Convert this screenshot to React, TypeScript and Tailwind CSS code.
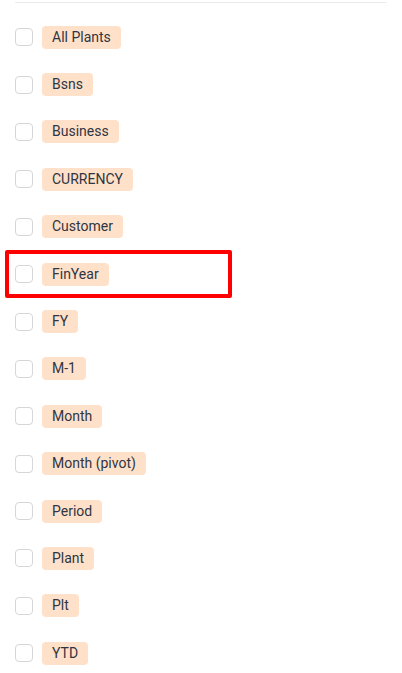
const fields = [
  'All Plants',
  'Bsns',
  'Business',
  'CURRENCY',
  'Customer',
  'FinYear',
  'FY',
  'M-1',
  'Month',
  'Month (pivot)',
  'Period',
  'Plant',
  'Plt',
  'YTD',
];

export default function App() {
  return (
    <div className="relative min-h-screen bg-white" style={{ fontFamily: 'Roboto, "Noto Sans", sans-serif' }}>
      <div className="px-[15px] pt-[2px]">
        <div className="h-px w-[372px] bg-[#ececec]" />
      </div>
      <ul className="pt-[10.5px] pl-[15px]">
        {fields.map(f => (
          <li key={f} className="relative flex h-[47.4px] items-center gap-[9px]">
            <span className="h-[18px] w-[18px] rounded-[4px] border border-[#d6d6d6] bg-white" />
            <span className="flex h-[23px] items-center rounded-[4px] bg-[#ffe1ca] px-[10px] text-[14px] text-[#2f3542]">
              {f}
            </span>
            {f === 'FinYear' && (
              <span className="absolute left-[-10px] top-[0px] h-[48px] w-[227px] rounded-[2px] border-4 border-[#ff0000]" />
            )}
          </li>
        ))}
      </ul>
    </div>
  );
}
